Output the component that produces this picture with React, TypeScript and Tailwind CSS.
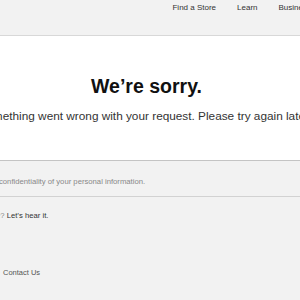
export default function App() {
  return (
    <div className="h-[300px] w-[300px] overflow-hidden bg-[#f2f2f2] font-['Liberation_Sans',sans-serif]">
      {/* top nav, scrolled so the right end is cut */}
      <div className="flex h-[36px] items-start justify-end gap-[21px] border-b border-[#d8d8d8] bg-[#f2f2f2] pt-[3px] text-[8px] text-[#333]">
        <span className="leading-[10px]">Find a Store</span>
        <span className="leading-[10px]">Learn</span>
        <span className="-mr-[11px] leading-[10px]">Business</span>
      </div>

      {/* error message — page is scrolled a little, so content centre sits left of 150 */}
      <div className="flex h-[124px] flex-col items-center bg-white pr-[10px] pt-[38px]">
        <h1 className="pl-[3px] text-[19.5px] font-bold leading-[24px] text-[#111]">We’re sorry.</h1>
        <div className="mt-[11px] flex w-full justify-center">
          <p className="whitespace-nowrap text-[11.8px] leading-[14px] text-[#333]">
            Something went wrong with your request. Please try again later.
          </p>
        </div>
      </div>

      {/* footer */}
      <div className="border-t border-[#c4c4c4] bg-[#f2f2f2] text-[7.7px] text-[#888]">
        <div className="h-[36px] border-b border-[#d2d2d2] pt-[16px]">
          <p className="-ml-[1px] whitespace-nowrap leading-[10px]">confidentiality of your personal information.</p>
        </div>
        <p className="-ml-[4px] mt-[14px] whitespace-nowrap leading-[10px]">
          e? <span className="text-[#333]">Let’s hear it.</span>
        </p>
        <p className="mt-[47px] pl-[3px] text-[7.5px] leading-[10px] text-[#555]">Contact Us</p>
      </div>
    </div>
  );
}
